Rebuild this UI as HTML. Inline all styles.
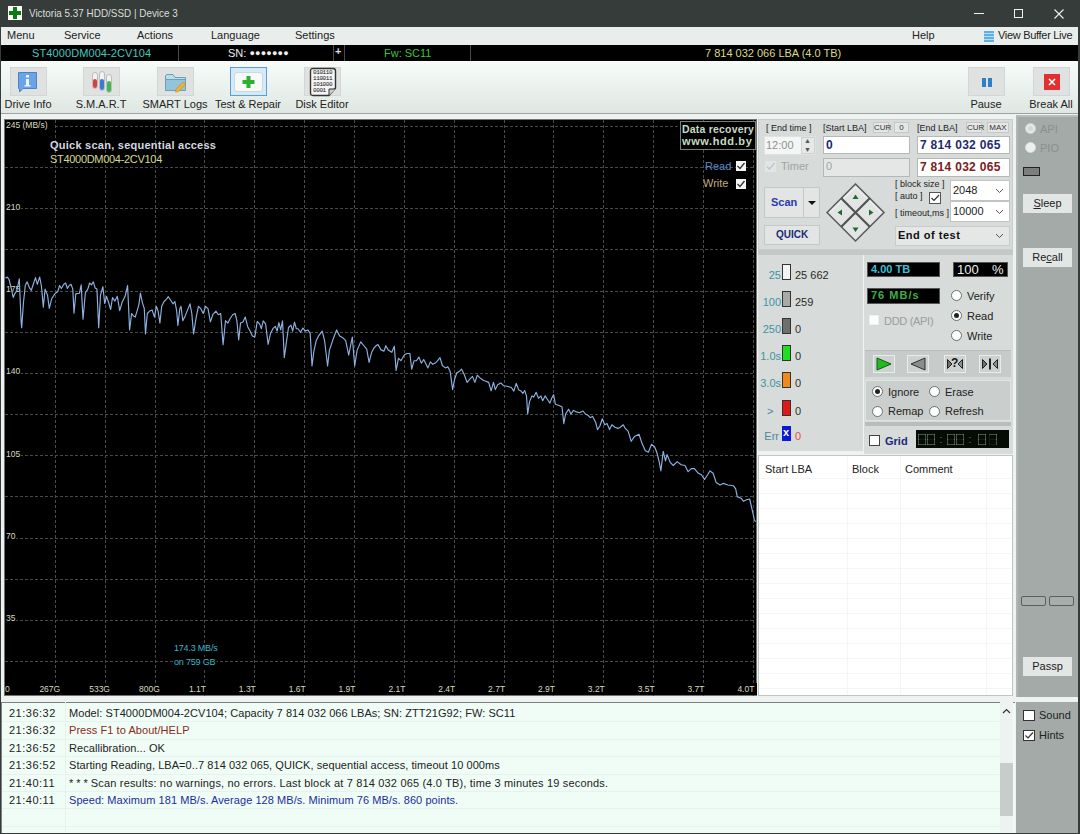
<!DOCTYPE html>
<html><head><meta charset="utf-8"><style>
*{margin:0;padding:0;box-sizing:border-box}
html,body{width:1080px;height:834px;overflow:hidden;background:#eef2f0;font-family:"Liberation Sans",sans-serif;font-size:11px;color:#222}
.a{position:absolute}
.t{position:absolute;white-space:nowrap;line-height:1}
.c{position:absolute;white-space:nowrap;line-height:1;text-align:center}
.tbb{position:absolute;top:67px;width:37px;height:29px;background:#dfe2e0;border:1px solid #d2d6d4}
.tbl{position:absolute;top:99px;white-space:nowrap;font-size:11px;color:#222;line-height:1;text-align:center;width:80px}
.inp{position:absolute;background:#fff;border:1px solid #b4b8b6}
.sbtn{position:absolute;background:#e4e7e5;border:1px solid #c4c8c6}
.bx{position:absolute;width:9px;border:1px solid #333}
.rad{position:absolute;width:11px;height:11px;border-radius:50%;background:#fff;border:1px solid #6a6e6c}
.rad.on:after{content:"";position:absolute;left:2px;top:2px;width:5px;height:5px;border-radius:50%;background:#222}
.chk{position:absolute;width:11px;height:11px;background:#fff;border:1px solid #444}
</style></head><body>
<div class="a" style="left:0;top:0;width:1080px;height:834px;background:#363c3a"></div>
<div class="a" style="left:1px;top:27px;width:1077px;height:806px;background:#eef2f0"></div>
<div class="a" style="left:8px;top:6px;width:14px;height:14px;background:#fff"></div>
<div class="a" style="left:13px;top:7px;width:4px;height:12px;background:#0a7c10"></div>
<div class="a" style="left:9px;top:11px;width:12px;height:4px;background:#0a7c10"></div>
<div class="t" style="left:29px;top:8px;font-size:11px;color:#dadedc;transform:scaleX(0.9);transform-origin:0 0">Victoria 5.37 HDD/SSD | Device 3</div>
<div class="a" style="left:974px;top:13px;width:10px;height:1px;background:#f0f0f0"></div>
<div class="a" style="left:1014px;top:9px;width:9px;height:9px;border:1px solid #f0f0f0"></div>
<svg class="a" style="left:1054px;top:9px" width="10" height="10"><path d="M0.5 0.5L9.5 9.5M9.5 0.5L0.5 9.5" stroke="#f0f0f0" stroke-width="1.1"/></svg>
<div class="a" style="left:1px;top:27px;width:1077px;height:18px;background:#e9eeec"></div>
<div class="t" style="left:7px;top:30px;color:#222;font-size:11px;letter-spacing:0">Menu</div>
<div class="t" style="left:64px;top:30px;color:#222;font-size:11px;letter-spacing:0">Service</div>
<div class="t" style="left:137px;top:30px;color:#222;font-size:11px;letter-spacing:0">Actions</div>
<div class="t" style="left:211px;top:30px;color:#222;font-size:11px;letter-spacing:0">Language</div>
<div class="t" style="left:295px;top:30px;color:#222;font-size:11px;letter-spacing:0">Settings</div>
<div class="t" style="left:912px;top:30px;color:#222;font-size:11px;letter-spacing:0">Help</div>
<div class="t" style="left:998px;top:30px;color:#222;font-size:11px;letter-spacing:-0.3px">View Buffer Live</div>
<div class="a" style="left:984px;top:31px;width:10px;height:11px;background:repeating-linear-gradient(#5fb0e8 0 2px,#b8dcf4 2px 3px)"></div>
<div class="a" style="left:1px;top:45px;width:1077px;height:16px;background:#000"></div>
<div class="a" style="left:178px;top:45px;width:1px;height:16px;background:#4a4a4a"></div>
<div class="a" style="left:333px;top:45px;width:1px;height:16px;background:#4a4a4a"></div>
<div class="a" style="left:344px;top:45px;width:1px;height:16px;background:#4a4a4a"></div>
<div class="a" style="left:470px;top:45px;width:1px;height:16px;background:#4a4a4a"></div>
<div class="t" style="left:32px;top:48px;color:#40c8c0;font-size:11px;letter-spacing:0.1px">ST4000DM004-2CV104</div>
<div class="t" style="left:228px;top:48px;color:#eee;font-size:11px">SN: <span style="letter-spacing:0.2px;font-size:9px;position:relative;top:-1px">●●●●●●●</span></div>
<div class="t" style="left:335px;top:46px;color:#ddd;font-size:11px;font-weight:bold">+</div>
<div class="t" style="left:384px;top:48px;color:#3cc43c;font-size:11px">Fw: SC11</div>
<div class="t" style="left:705px;top:48px;color:#dcd88a;font-size:11px">7 814 032 066 LBA (4.0 TB)</div>
<div class="a" style="left:1px;top:61px;width:1077px;height:52px;background:linear-gradient(#f7fcf9,#dfe7e3)"></div>
<div class="a" style="left:1px;top:113px;width:1077px;height:1px;background:#9ea2a0"></div>
<div class="tbb" style="left:10px"></div>
<div class="tbl" style="left:-12px">Drive Info</div>
<div class="tbb" style="left:83px"></div>
<div class="tbl" style="left:61px">S.M.A.R.T</div>
<div class="tbb" style="left:157px"></div>
<div class="tbl" style="left:135px">SMART Logs</div>
<div class="tbb" style="left:230px;background:#d4eaf8;border-color:#5a9ed6"></div>
<div class="tbl" style="left:208px">Test &amp; Repair</div>
<div class="tbb" style="left:304px"></div>
<div class="tbl" style="left:282px">Disk Editor</div>
<div class="tbb" style="left:968px"></div>
<div class="tbl" style="left:946px">Pause</div>
<div class="tbb" style="left:1033px"></div>
<div class="tbl" style="left:1011px">Break All</div>
<svg class="a" style="left:17px;top:71px" width="22" height="22"><path d="M1.5 1.5H19.5V17.5H6L2.5 21V17.5H1.5Z" fill="#6aa4e6" stroke="#4a84c8"/><rect x="9" y="4" width="3" height="2.5" fill="#e8f4ff"/><rect x="9" y="8" width="3" height="7" fill="#e8f4ff"/><rect x="7.5" y="14" width="6" height="1.5" fill="#e8f4ff"/></svg>
<svg class="a" style="left:91px;top:70px" width="22" height="24"><rect x="1.5" y="2.5" width="5" height="16" rx="2.5" fill="#f2f2f2" stroke="#b0b0b0" stroke-width="0.8"/><rect x="2" y="9" width="4" height="9" rx="2" fill="#d84040"/><rect x="8.5" y="1.5" width="5" height="19" rx="2.5" fill="#f2f2f2" stroke="#b0b0b0" stroke-width="0.8"/><rect x="9" y="9" width="4" height="11" rx="2" fill="#3a7ad8"/><rect x="15.5" y="4.5" width="5" height="18" rx="2.5" fill="#f2f2f2" stroke="#b0b0b0" stroke-width="0.8"/><rect x="16" y="11" width="4" height="11" rx="2" fill="#40b850"/></svg>
<svg class="a" style="left:164px;top:71px" width="24" height="22"><path d="M1.5 4.5V19.5H21.5V6.5H11L9 3.5H3Z" fill="#bcdcec" stroke="#6aa0b8"/><path d="M1.5 8.5H21.5V19.5H1.5Z" fill="#94c4dc" stroke="#6aa0b8"/><path d="M12 18L19 11L21.5 13.5L14.5 20.5L11.5 21Z" fill="#f0b030" stroke="#c88820" stroke-width="0.6"/></svg>
<svg class="a" style="left:233px;top:70px" width="31" height="24"><path d="M4 2.5H27Q29.5 2.5 29.5 5V19Q29.5 21.5 27 21.5H4Q1.5 21.5 1.5 19V5Q1.5 2.5 4 2.5Z" fill="#f6f9f8" stroke="#d0d8d4"/><rect x="13.5" y="6" width="4" height="12" fill="#2cb030"/><rect x="9.5" y="10" width="12" height="4" fill="#2cb030"/></svg>
<svg class="a" style="left:309px;top:67px" width="28" height="30"><path d="M4 1.5H24Q26.5 1.5 26.5 4V21L20 28.5H4Q1.5 28.5 1.5 26V4Q1.5 1.5 4 1.5Z" fill="#f4f4f4" stroke="#333" stroke-width="1.4"/><path d="M20 28.5V22H26.5" fill="#ccc" stroke="#333" stroke-width="1"/></svg>
<div class="a" style="left:313px;top:70px;width:20px;font-size:6px;line-height:6px;font-family:Liberation Mono;color:#111;white-space:pre;letter-spacing:-0.4px">010110
110011
101000
0001</div>
<div class="a" style="left:982px;top:78px;width:4px;height:9px;background:#2d7fc8"></div>
<div class="a" style="left:988px;top:78px;width:4px;height:9px;background:#2d7fc8"></div>
<div class="a" style="left:1044px;top:74px;width:16px;height:16px;background:#e03030"></div>
<svg class="a" style="left:1048px;top:78px" width="8" height="8"><path d="M1 1L7 7M7 1L1 7" stroke="#fff" stroke-width="1.6"/></svg>
<svg class="a" style="left:0;top:0" width="1080" height="834" viewBox="0 0 1080 834">
<rect x="4.5" y="119.5" width="752" height="576" fill="#000" stroke="#6e7270"/>
<path d="M5 126.5H755 M5 167.5H755 M5 208.5H755 M5 249.5H755 M5 291.5H755 M5 332.5H755 M5 373.5H755 M5 414.5H755 M5 455.5H755 M5 496.5H755 M5 538.5H755 M5 579.5H755 M5 620.5H755 M5 661.5H755 M55.5 120V696 M105.5 120V696 M155.5 120V696 M204.5 120V696 M254.5 120V696 M304.5 120V696 M354.5 120V696 M404.5 120V696 M454.5 120V696 M504.5 120V696 M553.5 120V696 M603.5 120V696 M653.5 120V696 M703.5 120V696 M753.5 120V696" stroke="#4a4a46" stroke-width="1" stroke-dasharray="3 2" fill="none"/>
<rect x="5" y="122" width="48.0" height="8" fill="#000"/>
<text x="6" y="128.4" fill="#d8d8c0" font-size="8.5" font-family="Liberation Sans">245 (MB/s)</text>
<rect x="5" y="204" width="15.8" height="8" fill="#000"/>
<text x="6" y="210.4" fill="#d8d8c0" font-size="8.5" font-family="Liberation Sans">210</text>
<rect x="5" y="286" width="15.8" height="8" fill="#000"/>
<text x="6" y="292.4" fill="#d8d8c0" font-size="8.5" font-family="Liberation Sans">175</text>
<rect x="5" y="368" width="15.8" height="8" fill="#000"/>
<text x="6" y="374.4" fill="#d8d8c0" font-size="8.5" font-family="Liberation Sans">140</text>
<rect x="5" y="451" width="15.8" height="8" fill="#000"/>
<text x="6" y="457.4" fill="#d8d8c0" font-size="8.5" font-family="Liberation Sans">105</text>
<rect x="5" y="533" width="11.2" height="8" fill="#000"/>
<text x="6" y="539.4" fill="#d8d8c0" font-size="8.5" font-family="Liberation Sans">70</text>
<rect x="5" y="615" width="11.2" height="8" fill="#000"/>
<text x="6" y="621.4" fill="#d8d8c0" font-size="8.5" font-family="Liberation Sans">35</text>
<text x="5" y="692" fill="#d8d8c0" font-size="8.5" font-family="Liberation Sans">0</text>
<rect x="38.4" y="683" width="21.2" height="12" fill="#000"/>
<text x="39.4" y="692" fill="#d8d8c0" font-size="8.5" font-family="Liberation Sans">267G</text>
<rect x="88.2" y="683" width="21.2" height="12" fill="#000"/>
<text x="89.2" y="692" fill="#d8d8c0" font-size="8.5" font-family="Liberation Sans">533G</text>
<rect x="138.1" y="683" width="21.2" height="12" fill="#000"/>
<text x="139.1" y="692" fill="#d8d8c0" font-size="8.5" font-family="Liberation Sans">800G</text>
<rect x="187.9" y="683" width="21.2" height="12" fill="#000"/>
<text x="188.9" y="692" fill="#d8d8c0" font-size="8.5" font-family="Liberation Sans">1.1T</text>
<rect x="237.8" y="683" width="21.2" height="12" fill="#000"/>
<text x="238.8" y="692" fill="#d8d8c0" font-size="8.5" font-family="Liberation Sans">1.3T</text>
<rect x="287.7" y="683" width="21.2" height="12" fill="#000"/>
<text x="288.7" y="692" fill="#d8d8c0" font-size="8.5" font-family="Liberation Sans">1.6T</text>
<rect x="337.5" y="683" width="21.2" height="12" fill="#000"/>
<text x="338.5" y="692" fill="#d8d8c0" font-size="8.5" font-family="Liberation Sans">1.9T</text>
<rect x="387.4" y="683" width="21.2" height="12" fill="#000"/>
<text x="388.4" y="692" fill="#d8d8c0" font-size="8.5" font-family="Liberation Sans">2.1T</text>
<rect x="437.2" y="683" width="21.2" height="12" fill="#000"/>
<text x="438.2" y="692" fill="#d8d8c0" font-size="8.5" font-family="Liberation Sans">2.4T</text>
<rect x="487.1" y="683" width="21.2" height="12" fill="#000"/>
<text x="488.1" y="692" fill="#d8d8c0" font-size="8.5" font-family="Liberation Sans">2.7T</text>
<rect x="537.0" y="683" width="21.2" height="12" fill="#000"/>
<text x="538.0" y="692" fill="#d8d8c0" font-size="8.5" font-family="Liberation Sans">2.9T</text>
<rect x="586.8" y="683" width="21.2" height="12" fill="#000"/>
<text x="587.8" y="692" fill="#d8d8c0" font-size="8.5" font-family="Liberation Sans">3.2T</text>
<rect x="636.7" y="683" width="21.2" height="12" fill="#000"/>
<text x="637.7" y="692" fill="#d8d8c0" font-size="8.5" font-family="Liberation Sans">3.5T</text>
<rect x="686.5" y="683" width="21.2" height="12" fill="#000"/>
<text x="687.5" y="692" fill="#d8d8c0" font-size="8.5" font-family="Liberation Sans">3.7T</text>
<rect x="736.4" y="683" width="21.2" height="12" fill="#000"/>
<text x="737.4" y="692" fill="#d8d8c0" font-size="8.5" font-family="Liberation Sans">4.0T</text>
<polyline points="5.4,278.2 7.2,277 9,279.4 11.4,289 13.2,297.5 15,293.3 16.8,290.9 19.3,278.8 21.1,321.6 21.7,327.6 23.5,302.3 25.3,285.5 27.1,281.8 29.5,287.9 31.3,290.3 33.7,283 35.5,277.6 37.3,284.3 39.7,277 41.5,286.7 43.3,307.1 45.1,289.1 47.5,295.1 49.3,308.3 51.7,298.7 54.8,293.9 57.8,291.5 59.6,285.5 61.4,288.5 63.8,284.3 65.6,283 67.4,288.5 69.2,285.5 71,284.3 72.8,289.1 74,313.1 75.8,293.9 79.4,293.3 81.2,284.9 83,319.2 85.4,292.7 87.8,289.1 89.6,283 91.5,284.9 93.3,281.8 95.1,287.9 96.9,289.1 98.7,327.6 100.5,295.1 102.9,286.7 104.7,303.5 106.5,296.3 108.9,303.5 110.7,309.5 112.5,297.5 114.9,301.1 117.3,296.3 119.7,310.7 122.1,302.3 125.1,296.3 127.6,285.5 129.6,330 131.6,313.5 133.4,315.9 135.2,317.1 137,311.1 138.8,305.1 140.4,293.1 142.4,302.7 144.3,308.7 145.5,334 147.3,313.5 149.7,311.1 152.1,309.9 154.5,317.1 156.3,306.3 158.1,311.1 159.9,323.1 161.7,306.3 164.1,301.5 166.5,299.1 168.3,296.7 170.7,300.3 173.1,303.9 174.9,301.5 176.7,311.1 177.9,325.5 179.8,308.7 181,306.3 182.8,320.7 185.2,315.9 187.6,309.9 190,303.9 191.8,313.5 193.6,334 196,318.3 198.4,306.3 200.8,308.7 203.2,313.5 205.6,306.3 208,308.7 210.4,321.9 212.8,314.7 215.9,311.1 218.3,314.7 220.7,313.5 223.1,344.8 225.5,320.7 227.9,323.1 230.3,318.3 232.7,314.7 235.1,313.5 236.9,320.7 238.7,340 240.5,323.1 242.9,321.9 245.3,317.1 247.7,326.7 250.1,331 252.4,335.9 254.8,337.1 257.2,321.5 259.6,323.9 261.4,328.7 263.2,320.9 265.6,323.9 268.1,344.3 270.5,333.5 272.9,328.7 275.3,326.3 277.1,331.1 278.9,322.7 280.7,329.9 282.5,320.9 284.3,357.6 286.1,344.3 288.5,327.5 290.9,325.1 292.7,331.1 294.5,322.1 296.3,328.7 298.1,328.7 300.5,332.3 302.9,328.1 305.4,331.1 307.8,329.9 310.2,333.5 312,366 313.8,351.6 316.2,340.7 318.6,335.9 322.2,331.1 324.6,340.7 327.6,366 329.4,350.4 333,339.5 336.6,329.9 339.7,335.9 342.7,337.7 345.7,340.7 348.7,355.2 352.3,337.1 354.7,366 357.1,350.4 360.7,341.9 363.7,345.5 366.7,349.2 369.1,362.4 371.5,352.8 373.9,347.9 376.4,345.5 378,344.5 381,349.9 384,351.1 385.8,345.7 388.2,349.9 391.8,352.3 394.3,346.3 396.1,370.4 398.5,358.3 400.9,360.7 404.5,354.7 406.9,353.5 409.9,353.5 411.7,369.2 414.1,360.7 416.5,360.7 418.9,357.1 421.3,363.1 423.7,359.5 425.5,363.1 427.9,367.9 430.4,361.9 432.8,364.3 435.2,363.1 437.6,360.7 440,357.7 442.4,365.5 445.4,367.9 447.8,366.7 450.2,371.6 452.6,389.6 454.4,380 456.8,372.8 459.2,371.6 461.6,369.2 464,374 467.1,382.4 470.1,378.8 472.5,376.4 474.9,382.4 477.3,375.2 479.7,377.6 482.7,380 485.7,381.2 488.7,382.4 491.1,390.8 493.5,382.4 495.3,389.6 497.7,384.8 500.8,383 503.6,385.7 507.2,386.3 511.4,387.5 513.8,391.1 516.2,383.3 518.7,389.9 521.1,391.1 522.9,393.5 524.7,390.5 526.5,395.9 527.7,414 529.5,401.9 531.9,395.9 533.7,397.1 536.1,392.3 538.5,398.3 540.9,395.9 542.7,400.7 545.1,395.9 547.5,399.5 549.9,403.1 551.7,398.3 553.6,394.7 555.4,404.3 559,405.5 562,406.7 563.8,423.6 565.6,414 568.6,409.2 571,414 573.4,410.4 575.8,411.6 579.4,412.8 583,411 585.4,414 587.8,415.2 590.3,417.6 592.7,416.4 595.7,422.4 597.5,429.6 599.9,426 602.3,418.8 604.7,424.8 607.1,423.6 609.5,429.6 611.9,424.8 614.9,427.2 617.9,428.4 620.3,427.2 623.3,424.8 625,428.1 628.1,431.2 631.2,441.3 634.4,436.6 639,434.3 642.1,443.6 645.3,450.7 648.4,452.2 651.5,444.4 654.6,446.8 657,453 659.3,462.4 660.9,470.9 663.2,451.4 665.5,460.8 667.1,454.6 670.2,462.4 673.3,465.5 677.2,461.6 681.1,464.7 685,465.5 688.1,471.7 691.3,468.6 694.4,468.6 698.3,473.3 701.4,474.8 704.5,479.5 707.6,474.8 710,470.9 713.1,473.3 716.2,482.6 720.1,485 723.2,483.4 727.9,485 733.3,485.7 735.7,488.9 737.2,496.6 741.1,498.2 743.5,501.3 746.6,499.8 749.7,499 752,509.1 754.4,520 755.6,521.6" fill="none" stroke="#8cb2e0" stroke-width="1.15" stroke-linejoin="round"/>
</svg>
<div class="t" style="left:50px;top:140px;color:#d4d8e0;font-size:11px;font-weight:bold;letter-spacing:0.25px">Quick scan, sequential access</div>
<div class="t" style="left:50px;top:154px;color:#d6d890;font-size:11px;letter-spacing:-0.3px">ST4000DM004-2CV104</div>
<div class="a" style="left:680px;top:121px;width:76px;height:29px;border:1px solid #7a7e7a;background:#000"></div>
<div class="t" style="left:682px;top:124px;color:#c8dcc8;font-size:10.5px;font-weight:bold;letter-spacing:0.2px">Data recovery</div>
<div class="t" style="left:682px;top:136px;color:#c4dcc4;font-size:11px;font-weight:bold;letter-spacing:0.6px">www.hdd.by</div>
<div class="t" style="left:705px;top:161px;color:#5a8cc8;font-size:11px">Read</div>
<div class="t" style="left:703px;top:178px;color:#c4aa88;font-size:11px">Write</div>
<div class="a" style="left:736px;top:161px;width:10px;height:10px;background:#f4f4f4"></div>
<svg class="a" style="left:736px;top:161px" width="10" height="10"><path d="M1.5 5L4 7.5L8.5 2" stroke="#333" stroke-width="1.3" fill="none"/></svg>
<div class="a" style="left:736px;top:179px;width:10px;height:10px;background:#f4f4f4"></div>
<svg class="a" style="left:736px;top:179px" width="10" height="10"><path d="M1.5 5L4 7.5L8.5 2" stroke="#333" stroke-width="1.3" fill="none"/></svg>
<div class="t" style="left:174px;top:644px;color:#3ab8c8;font-size:9px;letter-spacing:-0.2px;background:#000;padding-right:2px">174.3 MB/s</div>
<div class="t" style="left:174px;top:657px;color:#3ab8c8;font-size:9px;letter-spacing:-0.2px;background:#000;padding:1px 2px 1px 0">on 759 GB</div>
<div class="a" style="left:757px;top:114px;width:259px;height:588px;background:#eef2f0"></div>
<div class="a" style="left:758px;top:119px;width:255px;height:131px;background:#d7dbd9;border:1px solid #c8ccca"></div>
<div class="a" style="left:758px;top:250px;width:255px;height:5px;background:#c4c9c7"></div>
<div class="a" style="left:758px;top:255px;width:105px;height:196px;background:#d7dbd9"></div>
<div class="a" style="left:864px;top:255px;width:149px;height:199px;background:#d7dbd9"></div>
<div class="t" style="left:766px;top:124px;font-size:9px;color:#222">[ End time ]</div>
<div class="t" style="left:823px;top:124px;font-size:9px;color:#222">[Start LBA]</div>
<div class="t" style="left:917px;top:124px;font-size:9px;color:#222">[End LBA]</div>
<div class="sbtn c" style="left:873px;top:122px;width:16px;height:11px;font-size:8px;line-height:9px;color:#333">CUR</div>
<div class="sbtn c" style="left:894px;top:122px;width:15px;height:11px;font-size:8px;line-height:9px;color:#333">0</div>
<div class="sbtn c" style="left:966px;top:122px;width:16px;height:11px;font-size:8px;line-height:9px;color:#333">CUR</div>
<div class="sbtn c" style="left:987px;top:122px;width:22px;height:11px;font-size:8px;line-height:9px;color:#333">MAX</div>
<div class="a" style="left:764px;top:136px;width:52px;height:19px;background:#f4f6f5;border:1px solid #dfe2e0"></div>
<div class="t" style="left:766px;top:140px;font-size:11px;color:#909090">12:00</div>
<div class="a" style="left:801px;top:137px;width:14px;height:17px;background:#e6e9e7;border:1px solid #cfd2d0"></div>
<div class="t" style="left:804px;top:137px;font-size:7px;color:#555">▲</div>
<div class="t" style="left:804px;top:146px;font-size:7px;color:#555">▼</div>
<div class="chk" style="left:765px;top:161px;background:#e2e5e3;border-color:#e2e5e3"></div>
<svg class="a" style="left:765px;top:161px" width="11" height="11"><path d="M2 5.5L4.5 8L9.5 2" stroke="#c0c4c2" stroke-width="1.3" fill="none"/></svg>
<div class="t" style="left:781px;top:161px;font-size:11px;color:#a0a4a2">Timer</div>
<div class="inp" style="left:823px;top:136px;width:87px;height:18px"></div>
<div class="t" style="left:826px;top:139px;font-size:12px;font-weight:bold;color:#1a2a6a">0</div>
<div class="inp" style="left:823px;top:158px;width:87px;height:19px;background:#e4e7e5"></div>
<div class="t" style="left:826px;top:161px;font-size:11px;color:#a0a4a2">0</div>
<div class="inp" style="left:917px;top:136px;width:93px;height:18px"></div>
<div class="t" style="left:920px;top:139px;font-size:12px;font-weight:bold;color:#1c2c6c;letter-spacing:0.3px">7 814 032 065</div>
<div class="inp" style="left:917px;top:158px;width:93px;height:19px"></div>
<div class="t" style="left:920px;top:161px;font-size:12px;font-weight:bold;color:#7a2020;letter-spacing:0.3px">7 814 032 065</div>
<div class="sbtn" style="left:764px;top:187px;width:56px;height:31px;background:#e2e5e3"></div>
<div class="a" style="left:803px;top:188px;width:1px;height:29px;background:#c4c8c6"></div>
<div class="t" style="left:771px;top:197px;font-size:11px;font-weight:bold;color:#2a3ab0">Scan</div>
<div class="a" style="left:808px;top:201px;width:0;height:0;border-left:4px solid transparent;border-right:4px solid transparent;border-top:4px solid #111"></div>
<div class="sbtn c" style="left:764px;top:225px;width:56px;height:20px;background:#e2e5e3;font-size:10px;font-weight:bold;color:#1c2a78;line-height:18px">QUICK</div>
<svg class="a" style="left:826px;top:183px" width="60" height="60" viewBox="0 0 60 60">
<path d="M29.5 1L58 29.5L29.5 58L1 29.5Z" fill="#e2e5e3" stroke="#565a58" stroke-width="1.5"/>
<path d="M29.5 4L42 16.5M17 16.5L29.5 4M4 29.5L16.5 17M43 17L55 29.5M17 42L29.5 29.5L42 42" stroke="#fafcfb" stroke-width="1" fill="none" opacity="0.8"/>
<path d="M15.25 15.25L43.75 43.75M43.75 15.25L15.25 43.75" stroke="#505452" stroke-width="2.2"/>
<path d="M29.5 11.5L32.5 16H26.5Z" fill="#1b6e2a"/>
<path d="M29.5 49L32.5 44.5H26.5Z" fill="#1b6e2a"/>
<path d="M11.5 29.5L16 26.5V32.5Z" fill="#1b6e2a"/>
<path d="M47.5 29.5L43 26.5V32.5Z" fill="#1b6e2a"/>
</svg>
<div class="t" style="left:895px;top:180px;font-size:9px;color:#222">[ block size ]</div>
<div class="t" style="left:895px;top:192px;font-size:9px;color:#222">[ auto ]</div>
<div class="chk" style="left:929px;top:192px;width:12px;height:12px;background:#fff;border-color:#555"></div>
<svg class="a" style="left:929px;top:192px" width="12" height="12"><path d="M2.5 6L5 8.5L10 3" stroke="#333" stroke-width="1.2" fill="none"/></svg>
<div class="t" style="left:895px;top:209px;font-size:9px;color:#222">[ timeout,ms ]</div>
<div class="inp" style="left:950px;top:180px;width:60px;height:21px;border-color:#c0c4c2"></div>
<div class="t" style="left:953px;top:185px;font-size:11px;color:#222">2048</div>
<svg class="a" style="left:995px;top:188px" width="9" height="6"><path d="M1 1L4.5 4.5L8 1" stroke="#555" fill="none"/></svg>
<div class="inp" style="left:950px;top:201px;width:60px;height:21px;border-color:#c0c4c2"></div>
<div class="t" style="left:953px;top:206px;font-size:11px;color:#222">10000</div>
<svg class="a" style="left:995px;top:209px" width="9" height="6"><path d="M1 1L4.5 4.5L8 1" stroke="#555" fill="none"/></svg>
<div class="a" style="left:895px;top:226px;width:115px;height:20px;background:#e4e7e5;border:1px solid #c8ccca"></div>
<div class="t" style="left:898px;top:230px;font-size:11px;font-weight:bold;color:#111;letter-spacing:0.5px">End of test</div>
<svg class="a" style="left:995px;top:233px" width="9" height="6"><path d="M1 1L4.5 4.5L8 1" stroke="#555" fill="none"/></svg>
<div class="bx" style="left:782px;top:264px;height:16px;background:#f4f4f4;border-color:#333"></div>
<div class="t" style="right:299px;top:270px;font-size:11px;color:#3a96a4">25</div>
<div class="t" style="left:795px;top:270px;font-size:11px;color:#2a2a2a">25 662</div>
<div class="bx" style="left:782px;top:291px;height:16px;background:#a8aaa8;border-color:#333"></div>
<div class="t" style="right:299px;top:297px;font-size:11px;color:#3a96a4">100</div>
<div class="t" style="left:795px;top:297px;font-size:11px;color:#2a2a2a">259</div>
<div class="bx" style="left:782px;top:318px;height:16px;background:#6e706e;border-color:#333"></div>
<div class="t" style="right:299px;top:324px;font-size:11px;color:#3a96a4">250</div>
<div class="t" style="left:795px;top:324px;font-size:11px;color:#333">0</div>
<div class="bx" style="left:782px;top:345px;height:16px;background:#22dd22;border-color:#333"></div>
<div class="t" style="right:299px;top:351px;font-size:11px;color:#3a96a4">1.0s</div>
<div class="t" style="left:795px;top:351px;font-size:11px;color:#333">0</div>
<div class="bx" style="left:782px;top:372px;height:16px;background:#f08a1c;border-color:#333"></div>
<div class="t" style="right:299px;top:378px;font-size:11px;color:#3a96a4">3.0s</div>
<div class="t" style="left:795px;top:378px;font-size:11px;color:#333">0</div>
<div class="bx" style="left:782px;top:400px;height:16px;background:#e01818;border-color:#333"></div>
<div class="t" style="left:767px;top:406px;font-size:11px;color:#4a8a98">&gt;</div>
<div class="t" style="left:795px;top:406px;font-size:11px;color:#333">0</div>
<div class="bx" style="left:782px;top:426px;height:15px;background:#0a18d8;border-color:#0a18d8"></div>
<div class="t" style="right:301px;top:431px;font-size:11px;color:#4a8a98">Err</div>
<div class="t" style="left:795px;top:431px;font-size:11px;color:#e05050">0</div>
<div class="t" style="left:783px;top:427px;font-size:11px;font-weight:bold;color:#fff">x</div>
<div class="a" style="left:867px;top:262px;width:73px;height:15px;background:#000;border:1px solid #555"></div>
<div class="t" style="left:871px;top:264px;font-size:11px;font-weight:bold;color:#38c0d8">4.00 TB</div>
<div class="a" style="left:953px;top:262px;width:55px;height:15px;background:#000;border:1px solid #555"></div>
<div class="t" style="left:957px;top:263px;font-size:13px;color:#f0f0f0">100</div>
<div class="t" style="left:992px;top:263px;font-size:13px;color:#f0f0f0">%</div>
<div class="a" style="left:867px;top:288px;width:73px;height:16px;background:#000;border:1px solid #555"></div>
<div class="t" style="left:871px;top:290px;font-size:11px;font-weight:bold;color:#3ab04a;letter-spacing:1px">76 MB/s</div>
<div class="chk" style="left:869px;top:315px;width:10px;height:10px;background:#fcfdfc;border-color:#eef0ef"></div>
<div class="t" style="left:884px;top:316px;font-size:11px;color:#9a9e9c;letter-spacing:-0.3px">DDD (API)</div>
<div class="rad" style="left:951px;top:290px"></div>
<div class="t" style="left:967px;top:291px;font-size:11px;color:#222">Verify</div>
<div class="rad on" style="left:951px;top:310px"></div>
<div class="t" style="left:967px;top:311px;font-size:11px;color:#222">Read</div>
<div class="rad" style="left:951px;top:330px"></div>
<div class="t" style="left:967px;top:331px;font-size:11px;color:#222">Write</div>
<div class="a" style="left:865px;top:350px;width:146px;height:27px;background:#c7ccca;border-top:1px solid #b8bdbb"></div>
<div class="sbtn" style="left:873px;top:355px;width:22px;height:18px;background:#cdd1cf;border-color:#e8ecea"></div>
<div class="sbtn" style="left:907px;top:355px;width:22px;height:18px;background:#cdd1cf;border-color:#e8ecea"></div>
<div class="sbtn" style="left:944px;top:355px;width:22px;height:18px;background:#cdd1cf;border-color:#e8ecea"></div>
<div class="sbtn" style="left:979px;top:355px;width:22px;height:18px;background:#cdd1cf;border-color:#e8ecea"></div>
<svg class="a" style="left:876px;top:357px" width="16" height="14"><path d="M1 1L15 7L1 13Z" fill="#22bb22" stroke="#145a14" stroke-width="1"/></svg>
<svg class="a" style="left:910px;top:357px" width="16" height="14"><path d="M15 1L1 7L15 13Z" fill="#8a8e8c" stroke="#333" stroke-width="1"/></svg>
<svg class="a" style="left:946px;top:357px" width="18" height="14"><path d="M1.5 2.5L6 7L1.5 11.5Z" fill="#6a6e6c" stroke="#222" stroke-width="1"/><path d="M16.5 2.5L12 7L16.5 11.5Z" fill="#8a8e8c" stroke="#222" stroke-width="1"/></svg>
<div class="t" style="left:951px;top:357px;font-size:12px;font-weight:bold;color:#111">?</div>
<svg class="a" style="left:981px;top:357px" width="18" height="14"><path d="M1.5 2.5L6 7L1.5 11.5Z" fill="#6a6e6c" stroke="#222" stroke-width="1"/><path d="M16.5 2.5L12 7L16.5 11.5Z" fill="#8a8e8c" stroke="#222" stroke-width="1"/><path d="M9 1.5V12.5" stroke="#111" stroke-width="1.8"/></svg>
<div class="a" style="left:865px;top:380px;width:146px;height:41px;background:#cacfcd;border:1px solid #e0e4e2"></div>
<div class="rad on" style="left:872px;top:386px"></div>
<div class="t" style="left:888px;top:387px;font-size:11px;color:#222">Ignore</div>
<div class="rad" style="left:929px;top:386px"></div>
<div class="t" style="left:945px;top:387px;font-size:11px;color:#222">Erase</div>
<div class="rad" style="left:872px;top:406px"></div>
<div class="t" style="left:888px;top:406px;font-size:11px;color:#222">Remap</div>
<div class="rad" style="left:929px;top:406px"></div>
<div class="t" style="left:945px;top:406px;font-size:11px;color:#222">Refresh</div>
<div class="a" style="left:865px;top:422px;width:146px;height:4px;background:#b9bebc"></div>
<div class="chk" style="left:869px;top:435px;width:11px;height:11px"></div>
<div class="t" style="left:885px;top:436px;font-size:11px;font-weight:bold;color:#1a2a7a">Grid</div>
<div class="a" style="left:916px;top:430px;width:93px;height:18px;background:#050c05"></div>
<svg class="a" style="left:0;top:0" width="1080" height="834"><path d="M918.5 439.5L925.5 439.5 M927.5 439.5L934.5 439.5 M947.5 439.5L954.5 439.5 M956.5 439.5L963.5 439.5 M978.5 439.5L985.5 439.5 M989.5 444.5L996.5 444.5 M989.5 439.5L989.5 444.5 M989.5 434.5L989.5 439.5 M989.5 439.5L996.5 439.5" stroke="#222a22" stroke-width="1" stroke-dasharray="1 1" fill="none"/><path d="M918.5 434.5L925.5 434.5 M925.5 434.5L925.5 439.5 M925.5 439.5L925.5 444.5 M918.5 444.5L925.5 444.5 M918.5 439.5L918.5 444.5 M918.5 434.5L918.5 439.5 M927.5 434.5L934.5 434.5 M934.5 434.5L934.5 439.5 M934.5 439.5L934.5 444.5 M927.5 444.5L934.5 444.5 M927.5 439.5L927.5 444.5 M927.5 434.5L927.5 439.5 M947.5 434.5L954.5 434.5 M954.5 434.5L954.5 439.5 M954.5 439.5L954.5 444.5 M947.5 444.5L954.5 444.5 M947.5 439.5L947.5 444.5 M947.5 434.5L947.5 439.5 M956.5 434.5L963.5 434.5 M963.5 434.5L963.5 439.5 M963.5 439.5L963.5 444.5 M956.5 444.5L963.5 444.5 M956.5 439.5L956.5 444.5 M956.5 434.5L956.5 439.5 M978.5 434.5L985.5 434.5 M985.5 434.5L985.5 439.5 M985.5 439.5L985.5 444.5 M978.5 444.5L985.5 444.5 M978.5 439.5L978.5 444.5 M978.5 434.5L978.5 439.5 M989.5 434.5L996.5 434.5 M996.5 434.5L996.5 439.5 M996.5 439.5L996.5 444.5" stroke="#8a9a80" stroke-width="1" stroke-dasharray="1 1" fill="none"/><path d="M940.5 437.5h1M940.5 442.5h1M969.5 437.5h1M969.5 442.5h1" stroke="#6e7e66"/></svg>
<div class="a" style="left:758px;top:455px;width:255px;height:241px;background:#fff;border:1px solid #c0c4c2"></div>
<svg class="a" style="left:0;top:0" width="1080" height="834"><path d="M759 478.5H1012 M759 493.5H1012 M759 508.5H1012 M759 523.5H1012 M759 538.5H1012 M759 553.5H1012 M759 568.5H1012 M759 583.5H1012 M759 598.5H1012 M759 613.5H1012 M759 628.5H1012 M759 643.5H1012 M759 658.5H1012 M759 673.5H1012 M759 688.5H1012 M847.5 456V695 M900.5 456V695 M986.5 456V695" stroke="#f3f6f5" stroke-width="1"/></svg>
<div class="t" style="left:765px;top:464px;font-size:11px;color:#222">Start LBA</div>
<div class="t" style="left:852px;top:464px;font-size:11px;color:#222">Block</div>
<div class="t" style="left:905px;top:464px;font-size:11px;color:#222">Comment</div>
<div class="a" style="left:1016px;top:115px;width:62px;height:582px;background:#a4aaa8;border-top:2px solid #b8bebc;border-left:2px solid #b0b6b4"></div>
<div class="rad" style="left:1025px;top:123px;background:#e4e8e6;border-color:#d0d4d2"></div>
<div class="a" style="left:1028px;top:126px;width:5px;height:5px;border-radius:50%;background:#d4d8d6"></div>
<div class="t" style="left:1040px;top:124px;font-size:11px;color:#8a8f8d">API</div>
<div class="rad" style="left:1025px;top:142px;background:#eef0ef;border-color:#d8dcda"></div>
<div class="t" style="left:1040px;top:143px;font-size:11px;color:#8a8f8d">PIO</div>
<div class="a" style="left:1023px;top:167px;width:17px;height:9px;background:#7a7e7c;border:1px solid #222"></div>
<div class="a c" style="left:1023px;top:194px;width:49px;height:19px;background:#e2e6e4;line-height:19px;font-size:11px;color:#222"><u>S</u>leep</div>
<div class="a c" style="left:1023px;top:248px;width:49px;height:19px;background:#e2e6e4;line-height:19px;font-size:11px;color:#222">Re<u>c</u>all</div>
<div class="a" style="left:1021px;top:596px;width:25px;height:10px;background:#a8aeac;border:1px solid #5a5e5c;border-radius:2px"></div>
<div class="a" style="left:1049px;top:596px;width:25px;height:10px;background:#a8aeac;border:1px solid #5a5e5c;border-radius:2px"></div>
<div class="a c" style="left:1023px;top:657px;width:49px;height:19px;background:#e2e6e4;line-height:19px;font-size:11px;color:#222">Passp</div>
<div class="a" style="left:1px;top:702px;width:1014px;height:131px;background:#f0fdf6;border:1px solid #7c807e;border-right:none;border-bottom:none"></div>
<svg class="a" style="left:0;top:0" width="1080" height="834"><path d="M2 721.5H1000 M2 739.5H1000 M2 756.5H1000 M2 774.5H1000 M2 791.5H1000 M2 808.5H1000 M2 826.5H1000 M65.5 702V833" stroke="#e6f3ec" stroke-width="1"/></svg>
<div class="t" style="left:9px;top:708.0px;font-size:11px;color:#222;letter-spacing:0.5px">21:36:32</div>
<div class="t" style="left:69px;top:708.0px;font-size:11px;color:#222;letter-spacing:0.06px">Model: ST4000DM004-2CV104; Capacity 7 814 032 066 LBAs; SN: ZTT21G92; FW: SC11</div>
<div class="t" style="left:9px;top:725.4px;font-size:11px;color:#222;letter-spacing:0.5px">21:36:32</div>
<div class="t" style="left:69px;top:725.4px;font-size:11px;color:#8a2a1a;letter-spacing:0.06px">Press F1 to About/HELP</div>
<div class="t" style="left:9px;top:742.8px;font-size:11px;color:#222;letter-spacing:0.5px">21:36:52</div>
<div class="t" style="left:69px;top:742.8px;font-size:11px;color:#222;letter-spacing:0.06px">Recallibration... OK</div>
<div class="t" style="left:9px;top:760.2px;font-size:11px;color:#222;letter-spacing:0.5px">21:36:52</div>
<div class="t" style="left:69px;top:760.2px;font-size:11px;color:#222;letter-spacing:0.06px">Starting Reading, LBA=0..7 814 032 065, QUICK, sequential access, timeout 10 000ms</div>
<div class="t" style="left:9px;top:777.6px;font-size:11px;color:#222;letter-spacing:0.5px">21:40:11</div>
<div class="t" style="left:69px;top:777.6px;font-size:11px;color:#222;letter-spacing:0.17px"><span style="letter-spacing:3px">***</span>Scan results: no warnings, no errors. Last block at 7 814 032 065 (4.0 TB), time 3 minutes 19 seconds.</div>
<div class="t" style="left:9px;top:795.0px;font-size:11px;color:#222;letter-spacing:0.5px">21:40:11</div>
<div class="t" style="left:69px;top:795.0px;font-size:11px;color:#1a2ca0;letter-spacing:0.06px">Speed: Maximum 181 MB/s. Average 128 MB/s. Minimum 76 MB/s. 860 points.</div>
<div class="a" style="left:1000px;top:702px;width:13px;height:131px;background:#eef2f0"></div>
<svg class="a" style="left:1002px;top:708px" width="9" height="6"><path d="M1 5L4.5 1.5L8 5" stroke="#333" stroke-width="1.2" fill="none"/></svg>
<div class="a" style="left:1000px;top:763px;width:13px;height:53px;background:#c8ccca"></div>
<div class="a" style="left:1016px;top:702px;width:62px;height:131px;background:#a4aaa8"></div>
<div class="chk" style="left:1023px;top:710px;width:12px;height:11px;border-color:#333"></div>
<div class="t" style="left:1039px;top:710px;font-size:11px;color:#222">Sound</div>
<div class="chk" style="left:1023px;top:730px;width:12px;height:11px;border-color:#333"></div>
<svg class="a" style="left:1023px;top:730px" width="12" height="11"><path d="M2.5 5.5L5 8L10 2.5" stroke="#333" stroke-width="1.2" fill="none"/></svg>
<div class="t" style="left:1039px;top:730px;font-size:11px;color:#222">Hints</div>
</body></html>
